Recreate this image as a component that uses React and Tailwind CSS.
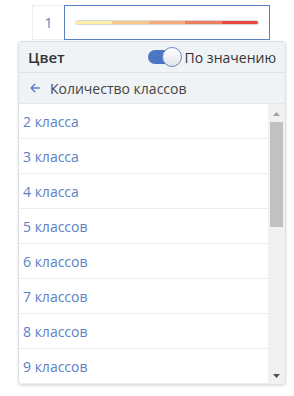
import React from 'react';

const ITEMS = ['2 класса', '3 класса', '4 класса', '5 классов', '6 классов', '7 классов', '8 классов', '9 классов'];
const COLORS = ['#fdf0a6', '#f6c98b', '#f3ab7c', '#ec7f60', '#e84a3f'];

const App = () => {
  return (
    <div className="w-[294px] h-[396px] bg-white text-[14px]" style={{ fontFamily: '"Open Sans", "Noto Sans", sans-serif' }}>
      {/* Top row */}
      <div className="flex pt-[5px] pl-[32px]">
        <div className="w-[32px] h-[35px] border border-r-0 border-[#eeeeee] flex items-center justify-center text-[#5b7fc7] text-[14px]">1</div>
        <div className="w-[206px] h-[35px] border border-[#5b7fc7] flex items-center pl-[10px] pr-[10px]">
          <div className="flex w-full h-[5px] rounded-full overflow-hidden border border-[#d8d8d8]">
            {COLORS.map((c, i) => (
              <div key={i} className="flex-1 h-full" style={{ backgroundColor: c }} />
            ))}
          </div>
        </div>
      </div>

      {/* Dropdown panel */}
      <div className="ml-[18px] mt-[1px] w-[268px] border border-[#dcdfe3] rounded-[4px] shadow-[0_1px_3px_rgba(0,0,0,0.12)] overflow-hidden bg-white">
        <div className="h-[31px] bg-[#f0f3f6] border-b border-[#dfe3e7] flex items-center justify-between pl-[9px] pr-[9px]">
          <span className="text-[15px] font-semibold text-[#333333]">Цвет</span>
          <div className="flex items-center gap-[3px]">
            <div className="relative w-[34px] h-[20px]">
              <div className="absolute left-0 top-[3px] w-[30px] h-[14px] rounded-full bg-[#4a76c4]" />
              <div className="absolute right-0 top-0 w-[20px] h-[20px] rounded-full bg-gradient-to-b from-white to-[#e3e5e8] border border-[#6b86c4]" />
            </div>
            <span className="text-[14px] text-[#333333]">По значению</span>
          </div>
        </div>
        <div className="h-[31px] bg-[#f0f3f6] border-b border-[#e4e7ea] flex items-center pl-[11px] gap-[10px] text-[#444444]">
          <svg width="10" height="10" viewBox="0 0 10 10" fill="none" stroke="#5b7fc7" strokeWidth="1.4" strokeLinecap="round" strokeLinejoin="round">
            <path d="M9.3 5H1M4.8 1.3L1 5l3.8 3.7" />
          </svg>
          <span>Количество классов</span>
        </div>
        <div className="flex">
          <div className="flex-1">
            {ITEMS.map((t, i) => (
              <div key={i} className="h-[35px] border-b border-[#eeeeee] flex items-center pl-[4px] text-[#5b7fc7]">{t}</div>
            ))}
          </div>
          <div className="w-[17px] bg-[#f1f1f1] flex flex-col items-center">
            <svg width="7" height="4" viewBox="0 0 7 4" className="mt-[8px]"><path d="M3.5 0L7 4H0z" fill="#a3a3a3" /></svg>
            <div className="mt-[6px] w-[13px] h-[105px] bg-[#c1c1c1]" />
            <div className="flex-1" />
            <svg width="7" height="4" viewBox="0 0 7 4" className="mb-[6px]"><path d="M0 0h7L3.5 4z" fill="#505050" /></svg>
          </div>
        </div>
      </div>
    </div>
  );
};

export default App;
